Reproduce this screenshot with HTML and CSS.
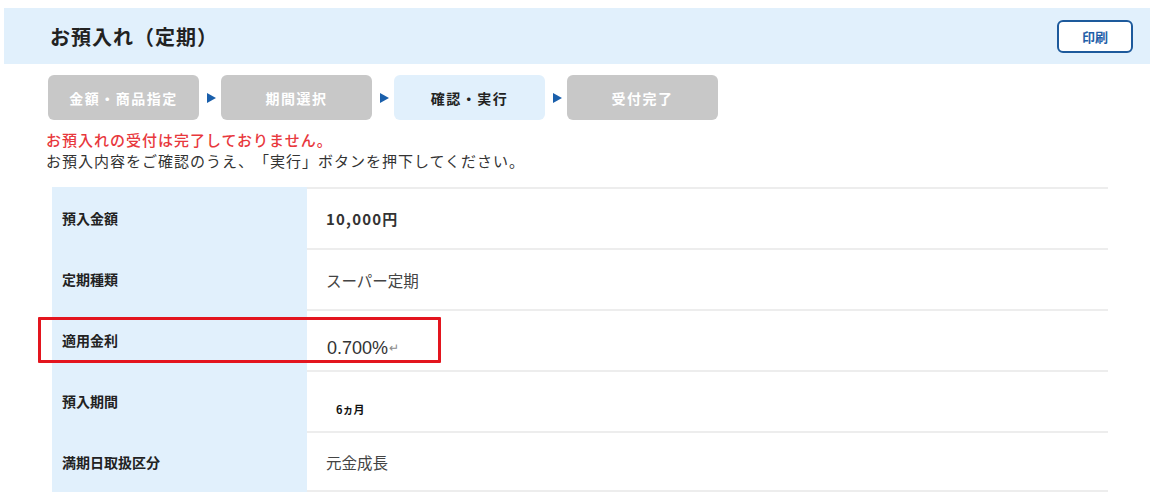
FILE: index.html
```html
<!DOCTYPE html>
<html lang="ja">
<head>
<meta charset="utf-8">
<title>お預入れ（定期）</title>
<link rel="stylesheet" href="styles.css">
</head>
<body>
<div class="page">
  <header class="head">
    <h1 class="title">お預入れ（定期）</h1>
    <button class="print">印刷</button>
  </header>

  <ol class="steps">
    <li class="step">金額・商品指定</li>
    <li class="arrow"></li>
    <li class="step">期間選択</li>
    <li class="arrow"></li>
    <li class="step step-active">確認・実行</li>
    <li class="arrow"></li>
    <li class="step">受付完了</li>
  </ol>

  <div class="msg">
    <p class="msg-warn">お預入れの受付は完了しておりません。</p>
    <p class="msg-note">お預入内容をご確認のうえ、「実行」ボタンを押下してください。</p>
  </div>

  <div class="table">
    <div class="row">
      <div class="label">預入金額</div>
      <div class="value value-amount">10,000円</div>
    </div>
    <div class="row">
      <div class="label">定期種類</div>
      <div class="value">スーパー定期</div>
    </div>
    <div class="row row-marked">
      <div class="label">適用金利</div>
      <div class="value value-low value-rate">0.700%<span class="ret">↵</span></div>
      <div class="mark"></div>
    </div>
    <div class="row">
      <div class="label">預入期間</div>
      <div class="value value-low value-small">6ヵ月</div>
    </div>
    <div class="row row-last">
      <div class="label">満期日取扱区分</div>
      <div class="value">元金成長</div>
    </div>
  </div>
</div>
</body>
</html>
```

FILE: styles.css
```css
* {
  box-sizing: border-box;
}

html, body {
  margin: 0;
  padding: 0;
  background: #ffffff;
}

body {
  font-family: "Noto Sans CJK JP", "Noto Sans", sans-serif;
  color: #333333;
  text-spacing-trim: space-all;
}

.page {
  width: 1160px;
  padding-top: 8px;
}

.head {
  margin: 0 10px 0 4px;
  height: 56px;
  background: #e1f0fc;
  display: flex;
  align-items: center;
  justify-content: space-between;
  padding: 0 17px 0 46px;
}

.title {
  margin: 0;
  font-size: 20px;
  font-weight: 700;
  color: #222222;
  letter-spacing: 1px;
}

.print {
  width: 76px;
  height: 33px;
  margin-top: 1px;
  border: 2.5px solid #1d5a9c;
  border-radius: 6px;
  background: #ffffff;
  color: #1f5fa8;
  font-family: "Noto Sans CJK JP", sans-serif;
  font-size: 13px;
  font-weight: 700;
  padding: 0;
}

.steps {
  list-style: none;
  margin: 11px 0 0 48px;
  padding: 0;
  display: flex;
  align-items: center;
  height: 45px;
}

.step {
  width: 151px;
  height: 45px;
  border-radius: 6px;
  background: #c8c8c8;
  color: #ffffff;
  font-size: 14px;
  font-weight: 700;
  letter-spacing: 1.5px;
  display: flex;
  align-items: center;
  justify-content: center;
}

.step-active {
  background: #e1f0fc;
  color: #222222;
}

.arrow {
  width: 22px;
  height: 45px;
  display: flex;
  align-items: center;
  justify-content: center;
}

.arrow::before {
  content: "";
  display: block;
  width: 0;
  height: 0;
  border-top: 5px solid transparent;
  border-bottom: 5px solid transparent;
  border-left: 9px solid #1a5fab;
  margin-left: 2px;
}

.msg {
  margin: 9px 0 0 46px;
  font-size: 15px;
  line-height: 21px;
  letter-spacing: 1px;
}

.msg p {
  margin: 0;
}

.msg-warn {
  color: #e8383d;
  font-weight: 500;
}

.msg-note {
  color: #333333;
}

.table {
  position: relative;
  margin: 16px 0 0 52px;
  width: 1056px;
  display: grid;
  grid-template-columns: 255px 1fr;
}

.row {
  display: contents;
}

.label {
  height: 61px;
  background: #e1f0fc;
  display: flex;
  align-items: center;
  padding-left: 10px;
  font-size: 14px;
  font-weight: 700;
  color: #222222;
}

.value {
  height: 61px;
  border-top: 2px solid #ededed;
  display: flex;
  align-items: center;
  padding-left: 19px;
  font-size: 15.5px;
  color: #444444;
}

.row-last .value {
  border-bottom: 2px solid #ededed;
}

.value-amount {
  font-size: 15px;
  font-weight: 700;
  letter-spacing: 1.2px;
  color: #333333;
}

.value-low {
  padding-top: 15px;
}

.value-rate {
  font-family: "Liberation Sans", "Noto Sans", sans-serif;
  font-size: 18px;
  color: #333333;
  padding-left: 20px;
}

.ret {
  font-size: 12px;
  color: #8a8a8a;
  margin-left: 1px;
}

.value-small {
  font-size: 11px;
  font-weight: 700;
  color: #111111;
  padding-left: 29px;
}

.mark {
  position: absolute;
  left: -14px;
  top: 130px;
  width: 403px;
  height: 46px;
  border: 3px solid #e3151e;
  border-radius: 1px;
  pointer-events: none;
}
```
